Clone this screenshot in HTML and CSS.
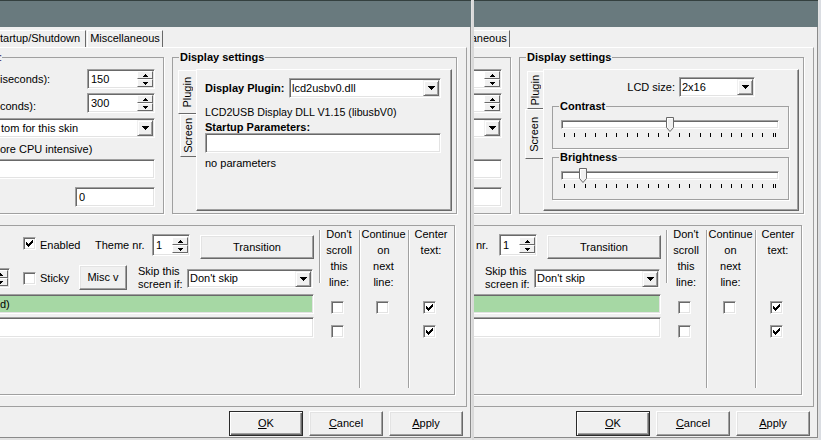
FILE: index.html
```html
<!DOCTYPE html>
<html>
<head>
<meta charset="utf-8">
<title>Display settings</title>
<link rel="stylesheet" href="styles.css">
</head>
<body>
<div class="screen">

 <div class="pane pane-left">
  <div class="dialog">
   <div class="titlebar"></div>
   <div class="frame">
    <div class="tabs"><div class="tab tab-first">tartup/Shutdown</div><div class="tab tab-misc">Miscellaneous</div></div>
    <div class="panel">
     <div class="upper">
      <fieldset class="grp grp-timing"><legend class="lg-clip">:</legend>
       <div class="trow trow1"><span class="tlabel">iseconds):</span><div class="field spin w68"><span class="val">150</span><span class="spinbtns"><i><svg width="5" height="3"><path d="M2 0h1v1h1v1h1v1H0V2h1V1h1z"/></svg></i><i><svg width="5" height="3"><path d="M0 0h5v1H4v1H3v1H2V2H1V1H0z"/></svg></i></span></div></div>
       <div class="trow trow2"><span class="tlabel">conds):</span><div class="field spin w68"><span class="val">300</span><span class="spinbtns"><i><svg width="5" height="3"><path d="M2 0h1v1h1v1h1v1H0V2h1V1h1z"/></svg></i><i><svg width="5" height="3"><path d="M0 0h5v1H4v1H3v1H2V2H1V1H0z"/></svg></i></span></div></div>
       <div class="field combo wfull combo-skin"><span class="val val-clip">tom for this skin</span><span class="drop"><svg width="7" height="4"><path d="M0 0h7v1H6v1H5v1H4v1H3V3H2V2H1V1H0z"/></svg></span></div>
       <div class="tnote">ore CPU intensive)</div>
       <div class="field wfull input1"></div>
       <div class="field input0"><span class="val">0</span></div>
      </fieldset>
      <fieldset class="grp grp-display"><legend>Display settings</legend>
       <div class="vt">
        <div class="vtabs"><div class="vtab sel tab-plug-sel"><span>Plugin</span></div><div class="vtab tab-scr"><span>Screen</span></div></div>
        <div class="vpage pg-plugin">
         <div class="prow"><span class="plabel">Display Plugin:</span><div class="field combo combo-plugin"><span class="val val-tight">lcd2usbv0.dll</span><span class="drop"><svg width="7" height="4"><path d="M0 0h7v1H6v1H5v1H4v1H3V3H2V2H1V1H0z"/></svg></span></div></div>
         <div class="pinfo">LCD2USB Display DLL V1.15 (libusbV0)</div>
         <div class="pstart">Startup Parameters:</div>
         <div class="field pinput"></div>
         <div class="pnone">no parameters</div>
        </div>
       </div>
      </fieldset>
     </div>
     <fieldset class="grp grp-screen">
      <div class="bot">
       <div class="bot-left">
        <div class="brow brow1">
         <span class="cb cb-en"><svg width="7" height="7"><path d="M0 2h1v1h1v1h1V3h1V2h1V1h1V0h1v3H6v1H5v1H4v1H3v1H2V6H1V5H0z"/></svg></span>
         <span class="lbl-en">Enabled</span>
         <span class="lbl-th">Theme nr.</span>
         <div class="field spin spin-th"><span class="val">1</span><span class="spinbtns"><i><svg width="5" height="3"><path d="M2 0h1v1h1v1h1v1H0V2h1V1h1z"/></svg></i><i><svg width="5" height="3"><path d="M0 0h5v1H4v1H3v1H2V2H1V1H0z"/></svg></i></span></div>
         <span class="btn btn-tr">Transition</span>
        </div>
        <div class="brow brow2">
         <div class="field spin stub"><span class="spinbtns"><i><svg width="5" height="3"><path d="M2 0h1v1h1v1h1v1H0V2h1V1h1z"/></svg></i><i><svg width="5" height="3"><path d="M0 0h5v1H4v1H3v1H2V2H1V1H0z"/></svg></i></span></div>
         <span class="cb cb-st"></span>
         <span class="lbl-st">Sticky</span>
         <span class="btn btn-misc">Misc v</span>
         <span class="lbl-skip">Skip this<br>screen if:</span>
         <div class="field combo combo-skip"><span class="val val-tight">Don't skip</span><span class="drop"><svg width="7" height="4"><path d="M0 0h7v1H6v1H5v1H4v1H3V3H2V2H1V1H0z"/></svg></span></div>
        </div>
        <div class="lrow lrow-green">d)</div>
        <div class="lrow lrow-white"></div>
       </div>
       <div class="col col1"><span class="sep"></span><div class="colc"><div class="chead">Don't<br>scroll<br>this<br>line:</div><span class="cb ccb"></span><span class="cb ccb"></span></div></div>
       <div class="col col2"><span class="sep"></span><div class="colc"><div class="chead">Continue<br>on<br>next<br>line:</div><span class="cb ccb"></span><span class="cb ccb ghost"></span></div></div>
       <div class="col col3"><span class="sep"></span><div class="colc"><div class="chead">Center<br>text:</div><span class="cb ccb"><svg width="7" height="7"><path d="M0 2h1v1h1v1h1V3h1V2h1V1h1V0h1v3H6v1H5v1H4v1H3v1H2V6H1V5H0z"/></svg></span><span class="cb ccb"><svg width="7" height="7"><path d="M0 2h1v1h1v1h1V3h1V2h1V1h1V0h1v3H6v1H5v1H4v1H3v1H2V6H1V5H0z"/></svg></span></div></div>
      </div>
     </fieldset>
    </div>
    <div class="btns"><span class="btn btn-def"><span><u>O</u>K</span></span><span class="btn"><span><u>C</u>ancel</span></span><span class="btn"><span><u>A</u>pply</span></span></div>
   </div>
  </div>
 </div>

 <div class="seam"></div>

 <div class="pane pane-right">
  <div class="dialog">
   <div class="titlebar"></div>
   <div class="frame">
    <div class="tabs"><div class="tab tab-first"></div><div class="tab tab-misc">Miscellaneous</div></div>
    <div class="panel">
     <div class="upper">
      <fieldset class="grp grp-timing"><legend class="lg-clip"></legend>
       <div class="trow trow1"><span class="tlabel"></span><div class="field spin w68"><span class="val"></span><span class="spinbtns"><i><svg width="5" height="3"><path d="M2 0h1v1h1v1h1v1H0V2h1V1h1z"/></svg></i><i><svg width="5" height="3"><path d="M0 0h5v1H4v1H3v1H2V2H1V1H0z"/></svg></i></span></div></div>
       <div class="trow trow2"><span class="tlabel"></span><div class="field spin w68"><span class="val"></span><span class="spinbtns"><i><svg width="5" height="3"><path d="M2 0h1v1h1v1h1v1H0V2h1V1h1z"/></svg></i><i><svg width="5" height="3"><path d="M0 0h5v1H4v1H3v1H2V2H1V1H0z"/></svg></i></span></div></div>
       <div class="field combo wfull combo-skin"><span class="val val-clip"></span><span class="drop"><svg width="7" height="4"><path d="M0 0h7v1H6v1H5v1H4v1H3V3H2V2H1V1H0z"/></svg></span></div>
       <div class="tnote"></div>
       <div class="field wfull input1"></div>
       <div class="field input0"><span class="val"></span></div>
      </fieldset>
      <fieldset class="grp grp-display"><legend>Display settings</legend>
       <div class="vt">
        <div class="vtabs"><div class="vtab tab-plug"><span>Plugin</span></div><div class="vtab sel tab-scr-sel"><span>Screen</span></div></div>
        <div class="vpage pg-screen">
         <div class="srow"><span class="slabel">LCD size:</span><div class="field combo combo-lcd"><span class="val val-tight">2x16</span><span class="drop"><svg width="7" height="4"><path d="M0 0h7v1H6v1H5v1H4v1H3V3H2V2H1V1H0z"/></svg></span></div></div>
         <fieldset class="grp grp-track"><legend>Contrast</legend>
          <div class="track"><div class="channel"></div><span class="thumb" style="left:105px"><svg width="8" height="15"><path class="tf" d="M0.5 0.5h7v10l-3.5 4l-3.5-4z"/><path class="th" d="M1.5 10V1.5h5"/></svg></span></div>
          <div class="ticks"><i></i><i></i><i></i><i></i><i></i><i></i><i></i><i></i><i></i><i></i><i></i><i></i><i></i><i></i><i></i><i></i><i></i><i></i><i></i><i></i><i class="dbl"></i></div>
         </fieldset>
         <fieldset class="grp grp-track grp-bright"><legend>Brightness</legend>
          <div class="track"><div class="channel"></div><span class="thumb" style="left:18px"><svg width="8" height="15"><path class="tf" d="M0.5 0.5h7v10l-3.5 4l-3.5-4z"/><path class="th" d="M1.5 10V1.5h5"/></svg></span></div>
          <div class="ticks"><i></i><i></i><i></i><i></i><i></i><i></i><i></i><i></i><i></i><i></i><i></i><i></i><i></i><i></i><i></i><i></i><i></i><i></i><i></i><i></i><i class="dbl"></i></div>
         </fieldset>
        </div>
       </div>
      </fieldset>
     </div>
     <fieldset class="grp grp-screen">
      <div class="bot">
       <div class="bot-left">
        <div class="brow brow1">
         <span class="cb cb-en"></span>
         <span class="lbl-en"></span>
         <span class="lbl-th lbl-th-clip">nr.</span>
         <div class="field spin spin-th"><span class="val">1</span><span class="spinbtns"><i><svg width="5" height="3"><path d="M2 0h1v1h1v1h1v1H0V2h1V1h1z"/></svg></i><i><svg width="5" height="3"><path d="M0 0h5v1H4v1H3v1H2V2H1V1H0z"/></svg></i></span></div>
         <span class="btn btn-tr">Transition</span>
        </div>
        <div class="brow brow2">
         <div class="field spin stub"><span class="spinbtns"><i></i><i></i></span></div>
         <span class="cb cb-st"></span>
         <span class="lbl-st"></span>
         <span class="btn btn-misc"></span>
         <span class="lbl-skip">Skip this<br>screen if:</span>
         <div class="field combo combo-skip"><span class="val val-tight">Don't skip</span><span class="drop"><svg width="7" height="4"><path d="M0 0h7v1H6v1H5v1H4v1H3V3H2V2H1V1H0z"/></svg></span></div>
        </div>
        <div class="lrow lrow-green"></div>
        <div class="lrow lrow-white"></div>
       </div>
       <div class="col col1"><span class="sep"></span><div class="colc"><div class="chead">Don't<br>scroll<br>this<br>line:</div><span class="cb ccb"></span><span class="cb ccb"></span></div></div>
       <div class="col col2"><span class="sep"></span><div class="colc"><div class="chead">Continue<br>on<br>next<br>line:</div><span class="cb ccb"></span><span class="cb ccb ghost"></span></div></div>
       <div class="col col3"><span class="sep"></span><div class="colc"><div class="chead">Center<br>text:</div><span class="cb ccb"><svg width="7" height="7"><path d="M0 2h1v1h1v1h1V3h1V2h1V1h1V0h1v3H6v1H5v1H4v1H3v1H2V6H1V5H0z"/></svg></span><span class="cb ccb"><svg width="7" height="7"><path d="M0 2h1v1h1v1h1V3h1V2h1V1h1V0h1v3H6v1H5v1H4v1H3v1H2V6H1V5H0z"/></svg></span></div></div>
      </div>
     </fieldset>
    </div>
    <div class="btns"><span class="btn btn-def"><span><u>O</u>K</span></span><span class="btn"><span><u>C</u>ancel</span></span><span class="btn"><span><u>A</u>pply</span></span></div>
   </div>
  </div>
 </div>

</div>
</body>
</html>
```

FILE: styles.css
```css
* { box-sizing: border-box; margin: 0; padding: 0; }
html, body { margin: 0; padding: 0; }
body {
  width: 821px; height: 440px; overflow: hidden;
  background: #e6e6e6;
  font-family: "Liberation Sans", Arial, sans-serif;
  font-size: 11px; line-height: 13px; color: #000;
}
svg { display: block; shape-rendering: crispEdges; }
svg path { fill: #000; }

.screen { display: flex; height: 440px; }
.pane { flex: none; height: 440px; overflow: hidden; }
.pane-left { width: 472px; background: #e4e4e4; }
.seam { flex: none; width: 2px; height: 440px; background: #d9d9d9; }
.pane-right { width: 347px; background: #dadde2; }

.dialog { width: 472px; height: 440px; display: flex; flex-direction: column; background: #e2e2e2; }
.pane-right .dialog { margin-left: -127px; }

.titlebar { flex: none; width: 471px; height: 27px; background: #697a7e; border-top: 1px solid #34403f; }

.frame {
  flex: none; width: 471px; height: 411px;
  background: #f0f0f0;
  border-right: 1px solid #8a8a8a; border-bottom: 1px solid #8a8a8a;
  display: flex; flex-direction: column;
}

/* top tabs */
.tabs { flex: none; height: 20px; display: flex; align-items: flex-end; }
.tab { height: 17px; line-height: 15px; border-top: 1px solid #fff; border-right: 1px solid #696969; white-space: nowrap; overflow: hidden; }
.tab-first { width: 86px; }
.tab-misc { width: 76px; margin-left: 1px; border-left: 1px solid #fff; text-align: center; }

.panel {
  flex: none; width: 467px; height: 360px;
  border-top: 1px solid #fff; border-right: 1px solid #a0a0a0; border-bottom: 1px solid #a0a0a0;
}

/* group boxes */
.upper { display: flex; margin-top: 3px; }
.grp { flex: none; min-width: 0; border: 1px solid #a0a0a0; box-shadow: 1px 1px 0 #fff; }
.grp legend { margin-left: 6px; padding: 0 1px; font-weight: bold; line-height: 13px; }
.grp legend.lg-clip { margin-left: 8px; padding: 0; font-weight: normal; color: #1a2a6a; min-width: 3px; min-height: 13px; }
.grp-timing { margin-left: -10px; width: 174px; height: 163px; }
.grp-display { margin-left: 8px; width: 285px; height: 163px; }

/* common controls */
.field {
  flex: none; display: flex; align-items: center; height: 20px;
  background: #fff; border: 1px solid; border-color: #a0a0a0 #fff #fff #a0a0a0;
  box-shadow: inset 1px 1px 0 #696969, inset -1px -1px 0 #e3e3e3;
  white-space: nowrap; overflow: hidden;
}
.val { padding-left: 3px; }
.val-tight { padding-left: 2px; }
.spinbtns { margin-left: auto; margin-right: 1px; width: 16px; height: 18px; display: flex; flex-direction: column; padding: 1px 0; }
.spinbtns i {
  flex: 1; display: flex; align-items: center; justify-content: center;
  background: #f0f0f0; border: 1px solid; border-color: #fff #696969 #696969 #fff;
}
.drop {
  margin-left: auto; margin-right: 1px; width: 16px; height: 16px; flex: none;
  display: flex; align-items: center; justify-content: center;
  background: #f0f0f0; border: 1px solid; border-color: #f0f0f0 #696969 #696969 #f0f0f0;
  box-shadow: inset 1px 1px 0 #fff, inset -1px -1px 0 #a0a0a0;
}
.btn {
  flex: none; display: flex; align-items: center; justify-content: center;
  background: #f0f0f0; border: 1px solid; border-color: #fff #696969 #696969 #fff;
  box-shadow: inset -1px -1px 0 #a0a0a0, inset 1px 1px 0 #e3e3e3;
  white-space: nowrap;
}
.btn-def { border-color: #2a2a2a; box-shadow: inset 1px 1px 0 #fff, inset -1px -1px 0 #696969, inset -2px -2px 0 #a0a0a0; }
.cb {
  flex: none; width: 13px; height: 13px; display: flex; align-items: center; justify-content: center;
  background: #fff; border: 1px solid; border-color: #a0a0a0 #fff #fff #a0a0a0;
  box-shadow: inset 1px 1px 0 #696969, inset -1px -1px 0 #e3e3e3;
}
.ghost { visibility: hidden; }

/* timing group */
.trow { display: flex; height: 20px; padding-left: 9px; }
.trow1 { margin-top: 5px; align-items: center; }
.trow2 { margin-top: 4px; }
.trow2 .tlabel { align-self: flex-end; }
.tlabel { width: 87px; flex: none; white-space: nowrap; min-height: 13px; }
.w68 { width: 68px; }
.wfull { width: 164px; }
.combo-skin { margin-top: 5px; padding-left: 8px; }
.val-clip { padding-left: 1px; }
.tnote { margin-top: 5px; padding-left: 9px; white-space: nowrap; height: 13px; }
.input1 { margin-top: 3px; }
.input0 { margin: 8px 0 0 84px; width: 80px; }

/* vertical tabs */
.vt { display: flex; margin: 5px 0 0 5px; height: 142px; }
.vtabs { flex: none; width: 18px; display: flex; flex-direction: column; padding-top: 1px; }
.vtab {
  flex: none; display: flex; align-items: center; justify-content: center;
  margin-left: 2px; border: 1px solid; border-color: #fff transparent #696969 #fff; border-right: 0;
}
.vtab span { writing-mode: vertical-rl; transform: rotate(180deg); line-height: 13px; white-space: nowrap; }
.vtab.sel { margin-left: 0; }
.tab-plug-sel { height: 44px; }
.tab-scr { height: 43px; }
.tab-plug { height: 38px; margin-top: 1px; }
.tab-scr-sel { height: 50px; }
.vpage {
  flex: none; width: 256px; height: 142px;
  border: 1px solid; border-color: #fff #696969 #696969 #fff;
  box-shadow: inset -1px -1px 0 #a0a0a0;
}

/* plugin page */
.pg-plugin { padding-left: 8px; }
.prow { display: flex; align-items: center; margin-top: 8px; height: 20px; }
.plabel { width: 84px; flex: none; font-weight: bold; white-space: nowrap; }
.combo-plugin { width: 152px; }
.pinfo { margin-top: 8px; white-space: nowrap; font-size: 10.7px; }
.pstart { margin-top: 2px; font-weight: bold; line-height: 12px; }
.pinput { width: 236px; }
.pnone { margin-top: 4px; }

/* screen page */
.srow { display: flex; align-items: center; margin-top: 7px; height: 20px; padding-right: 43px; }
.slabel { flex: 1; text-align: right; padding-right: 4px; white-space: nowrap; }
.combo-lcd { width: 76px; }
.grp-track { margin: 3px 0 0 8px; width: 237px; height: 49px; }
.grp-bright { margin-top: 2px; }
.track { position: relative; margin: 7px 0 0 8px; width: 218px; height: 9px; }
.channel {
  height: 9px; background: #fff; border: 1px solid; border-color: #a0a0a0 #fff #fff #a0a0a0;
  box-shadow: inset 1px 1px 0 #696969, inset -1px -1px 0 #e3e3e3;
}
.thumb { position: absolute; top: -3px; width: 8px; height: 15px; }
.thumb svg { shape-rendering: auto; }
.thumb svg path.tf { fill: #f0f0f0; stroke: #696969; }
.thumb svg path.th { fill: none; stroke: #fff; }
.ticks { display: flex; justify-content: space-between; margin: 4px 0 0 11px; width: 212px; height: 5px; }
.ticks i { width: 1px; height: 4px; background: #000; }
.ticks i.dbl { width: 3px; background: linear-gradient(90deg, #000 0 1px, transparent 1px 2px, #000 2px 3px); }

/* bottom group */
.grp-screen { margin: 11px 0 0 -10px; width: 465px; height: 170px; }
.bot { display: flex; }
.bot-left { flex: none; width: 323px; }
.brow { display: flex; height: 25px; }
.brow1 { margin-top: 8px; }
.brow2 { margin-top: 6px; }
.cb-en { margin: 3px 0 0 32px; }
.lbl-en { flex: none; margin-left: 4px; width: 55px; line-height: 22px; }
.lbl-th { flex: none; width: 57px; line-height: 22px; white-space: nowrap; }
.lbl-th-clip { padding-left: 34px; }
.spin-th { width: 38px; height: 22px; }
.btn-tr { margin: 1px 0 0 10px; width: 114px; height: 24px; }
.stub { width: 19px; height: 20px; margin-top: 3px; }
.cb-st { margin: 7px 0 0 13px; }
.lbl-st { flex: none; margin-left: 4px; width: 39px; line-height: 26px; }
.btn-misc { width: 48px; height: 25px; }
.lbl-skip { flex: none; margin-left: 11px; width: 49px; line-height: 13px; white-space: nowrap; }
.combo-skip { width: 126px; height: 19px; margin-top: 4px; }
.lrow {
  width: 323px; height: 20px; margin-top: 4px; padding-left: 8px; line-height: 18px;
  border: 1px solid; border-color: #a0a0a0 #fff #fff #a0a0a0;
  box-shadow: inset 1px 1px 0 #696969, inset -1px -1px 0 #e3e3e3;
}
.lrow-green { background: #a6d8a4; }
.lrow-white { margin-top: 3px; height: 21px; background: #fff; }

.col { flex: none; display: flex; }
.col1 { margin-left: 5px; width: 40px; }
.col2 { width: 49px; }
.col3 { width: 46px; }
.sep { flex: none; width: 2px; margin-top: 4px; height: 158px; border-left: 1px solid #a0a0a0; background: #fff; }
.col1 .sep { height: 53px; }
.colc { flex: 1; display: flex; flex-direction: column; align-items: center; }
.chead { height: 64px; line-height: 16px; text-align: center; margin-right: 2px; white-space: nowrap; }
.ccb { margin: 11px 5px 0 0; }

/* dialog buttons */
.btns { flex: none; display: flex; justify-content: flex-end; gap: 6px; margin-top: 4px; padding-right: 7px; }
.btns .btn { width: 74px; height: 25px; }
```
